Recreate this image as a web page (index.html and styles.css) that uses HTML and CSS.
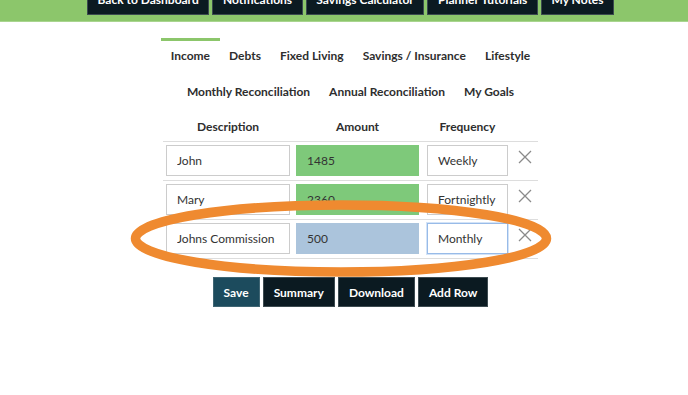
FILE: index.html
```html
<!DOCTYPE html>
<html lang="en">
<head>
<meta charset="utf-8">
<title>Income Planner</title>
<link rel="stylesheet" href="styles.css">
</head>
<body>
<header class="topbar">
  <nav class="topnav">
    <a class="navbtn">Back to Dashboard</a>
    <a class="navbtn">Notifications</a>
    <a class="navbtn">Savings Calculator</a>
    <a class="navbtn">Planner Tutorials</a>
    <a class="navbtn">My Notes</a>
  </nav>
</header>
<main class="page">
  <ul class="tabs">
    <li class="tab active">Income</li>
    <li class="tab">Debts</li>
    <li class="tab">Fixed Living</li>
    <li class="tab">Savings / Insurance</li>
    <li class="tab">Lifestyle</li>
    <li class="tab">Monthly Reconciliation</li>
    <li class="tab">Annual Reconciliation</li>
    <li class="tab">My Goals</li>
  </ul>
  <div class="table">
    <div class="thead">
      <div class="th c-desc">Description</div>
      <div class="th c-amt">Amount</div>
      <div class="th c-freq">Frequency</div>
    </div>
    <div class="row">
      <input class="box c-desc" type="text" value="John">
      <input class="box c-amt amt-green" type="text" value="1485">
      <input class="box c-freq" type="text" value="Weekly">
      <svg class="del" viewBox="0 0 14 14"><path d="M1 1L13 13M13 1L1 13"/></svg>
    </div>
    <div class="row">
      <input class="box c-desc" type="text" value="Mary">
      <input class="box c-amt amt-green" type="text" value="2360">
      <input class="box c-freq" type="text" value="Fortnightly">
      <svg class="del" viewBox="0 0 14 14"><path d="M1 1L13 13M13 1L1 13"/></svg>
    </div>
    <div class="row last">
      <input class="box c-desc" type="text" value="Johns Commission">
      <input class="box c-amt amt-blue" type="text" value="500">
      <input class="box c-freq focused" type="text" value="Monthly">
      <svg class="del" viewBox="0 0 14 14"><path d="M1 1L13 13M13 1L1 13"/></svg>
    </div>
  </div>
  <div class="actions">
    <button class="btn btn-save">Save</button>
    <button class="btn">Summary</button>
    <button class="btn">Download</button>
    <button class="btn">Add Row</button>
  </div>
</main>
<svg class="annotation" viewBox="0 0 688 395" width="688" height="395">
  <ellipse cx="341" cy="238.5" rx="205.5" ry="33.5" fill="none" stroke="#ef8a30" stroke-width="9.5"/>
</svg>
</body>
</html>
```
FILE: styles.css
```css
html, body {
  margin: 0;
  padding: 0;
  background: #ffffff;
  font-family: "Lato", "Open Sans", sans-serif;
  color: #333333;
}
body {
  position: relative;
  width: 688px;
  height: 395px;
  overflow: hidden;
}
.topbar {
  height: 21px;
  background: #8cc66b;
  border-bottom: 1px solid #a9d58f;
  overflow: hidden;
  padding-left: 13px;
}
.topnav {
  display: flex;
  justify-content: center;
  gap: 3px;
  margin-top: -14px;
}
.navbtn {
  display: block;
  background: #0b1a21;
  color: #ffffff;
  font-size: 12px;
  font-weight: 700;
  line-height: 14px;
  padding: 7px 9.6px;
  border: 1px solid #3b4a4f;
  border-top: none;
}
.page {
  padding-left: 13px;
  padding-top: 16px;
}
.tabs {
  list-style: none;
  margin: 0 auto;
  padding: 0;
  width: 400px;
  display: flex;
  flex-wrap: wrap;
  justify-content: center;
}
.tab {
  font-size: 12px;
  font-weight: 700;
  line-height: 16px;
  padding: 7px 9.5px 10px;
  border-top: 3px solid transparent;
  color: #2e2e2e;
}
.tab.active {
  border-top-color: #8cc66b;
}
.table {
  width: 375px;
  margin: 3px auto 0;
}
.thead {
  display: flex;
  padding-left: 3px;
  padding-top: 6px;
  padding-bottom: 6px;
}
.th {
  font-size: 12px;
  font-weight: 700;
  line-height: 16px;
  text-align: center;
  color: #2e2e2e;
}
.row {
  display: flex;
  align-items: flex-start;
  border-top: 1px solid #dddddd;
  padding: 3px 0 4px 3px;
}
.row.last {
  border-bottom: 1px solid #dddddd;
}
.c-desc { width: 124px; margin-right: 6px; }
.c-amt { width: 123px; margin-right: 8px; }
.c-freq { width: 81px; margin-right: 10px; }
.box {
  box-sizing: border-box;
  height: 31px;
  border: 1px solid #cccccc;
  background: #ffffff;
  padding: 0 0 0 10px;
  font-family: "Lato", "Open Sans", sans-serif;
  font-size: 12px;
  color: #333333;
  outline: none;
  border-radius: 0;
}
.amt-green {
  background: #7ec97a;
  border-color: #7ec97a;
}
.amt-blue {
  background: #abc4dc;
  border-color: #abc4dc;
}
.focused {
  border-color: #98bbe8;
  box-shadow: 0 0 0 1px #d3e3f7;
}
.del {
  width: 14px;
  height: 14px;
  margin-top: 5px;
  fill: none;
  stroke: #8a8a8a;
  stroke-width: 1.3;
}
.actions {
  display: flex;
  justify-content: center;
  gap: 3px;
  margin-top: 18px;
}
.btn {
  height: 30px;
  padding: 0 10px;
  border: 1px solid #3d4b50;
  background: #0b1a21;
  color: #ffffff;
  font-family: "Lato", "Open Sans", sans-serif;
  font-size: 12px;
  font-weight: 700;
  border-radius: 0;
}
.btn-save {
  background: #1c4b5d;
  border-color: #3f6573;
}
.annotation {
  position: absolute;
  left: 0;
  top: 0;
  pointer-events: none;
}
```
